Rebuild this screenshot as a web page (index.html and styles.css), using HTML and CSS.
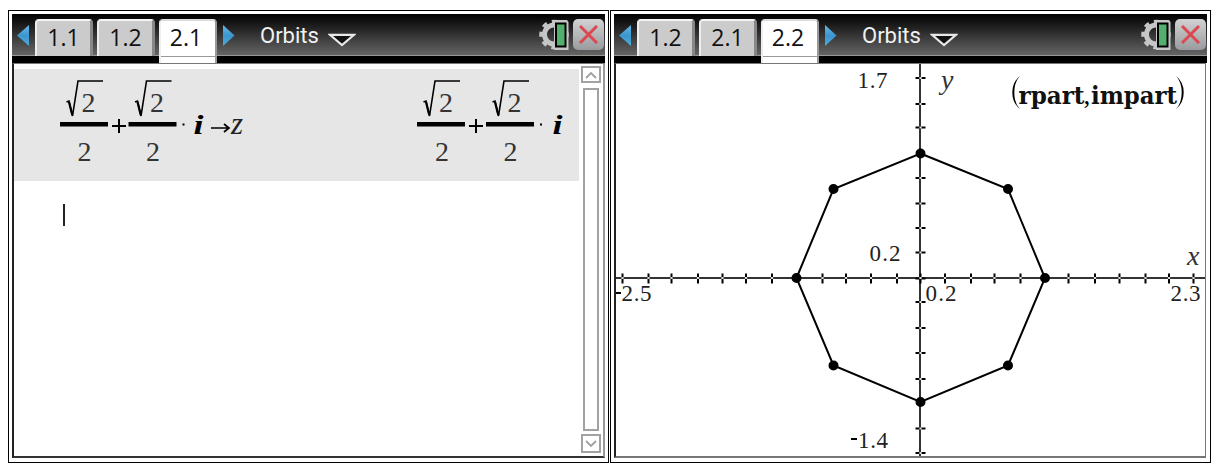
FILE: index.html
```html
<!DOCTYPE html>
<html lang="en">
<head>
<meta charset="utf-8">
<title>Orbits</title>
<link rel="stylesheet" href="styles.css">
</head>
<body>
<svg class="defs" width="0" height="0" aria-hidden="true">
  <defs>
    <linearGradient id="blue" x1="0" y1="0" x2="0" y2="1"><stop offset="0" stop-color="#68b8e4"/><stop offset="0.5" stop-color="#3d96d0"/><stop offset="1" stop-color="#4cabd8"/></linearGradient>
    <symbol id="prev" viewBox="0 0 12 21"><path d="M12 0V21L0 10.5Z" fill="url(#blue)"/></symbol>
    <symbol id="next" viewBox="0 0 12 21"><path d="M0 0V21L11.5 10.5Z" fill="url(#blue)"/></symbol>
    <symbol id="menu" viewBox="0 0 28 14"><path d="M2 1.8H26L14 12Z" fill="#111" stroke="#e8e8e8" stroke-width="2.2"/></symbol>
    <symbol id="gear" viewBox="0 0 30 32">
      <g fill="none" stroke="#c6c6c6"><circle cx="15" cy="15.500" r="9.500" stroke-width="5"/><circle cx="15" cy="15.500" r="13" stroke-width="3.500" stroke-dasharray="5.1 5.1" stroke-dashoffset="2.5"/></g>
      <path d="M15 1H28L29.500 3V31H15Z" fill="#c6c6c6"/>
      <rect x="17" y="4.500" width="9.500" height="23" fill="#50b06c" stroke="#000" stroke-width="2"/>
    </symbol>
    <symbol id="frac" viewBox="0 0 49 92" overflow="visible">
      <path d="M6.5 30L9 29L12.5 44L18 9H43" fill="none" stroke="#000" stroke-width="1.6"/>
      <path d="M9 30L12.3 43" stroke="#000" stroke-width="2.2"/>
      <rect x="0" y="50" width="48" height="4.5"/>
    </symbol>
  </defs>
</svg>
<main class="screens">
  <section class="screen">
    <header class="bar">
      <svg class="prev"><use href="#prev"/></svg>
      <nav class="tabs"><span class="tab">1.1</span><span class="tab">1.2</span><span class="tab active">2.1</span></nav>
      <svg class="next"><use href="#next"/></svg>
      <span class="name">Orbits</span>
      <svg class="menu"><use href="#menu"/></svg>
      <svg class="gear"><use href="#gear"/></svg>
      <span class="close"><svg width="19" height="19" viewBox="0 0 19 19"><path d="M1 1L18 18M18 1L1 18" stroke="#dc4850" stroke-width="3"/></svg></span>
    </header>
    <div class="calc">
      <div class="work">
        <div class="entry">
          <svg class="math" width="190" height="112" viewBox="57 69 190 112">
            <use href="#frac" x="60" y="72" width="49" height="92"/>
            <use href="#frac" x="128.5" y="72" width="49" height="92"/>
            <g class="num"><text x="81.5" y="112">2</text><text x="77.5" y="161">2</text><text x="150" y="112">2</text><text x="146" y="161">2</text></g>
            <path class="plus" d="M112 126H126M119 119V133"/>
            <rect x="182.5" y="123.5" width="2" height="2"/>
            <text class="unit" x="193.5" y="134" textLength="10" lengthAdjust="spacingAndGlyphs">i</text>
            <path class="to" d="M211 128H229M224 124L229 128L224 132"/>
            <text class="var" x="231" y="134">z</text>
          </svg>
          <svg class="math" width="155" height="112" viewBox="57 69 155 112">
            <use href="#frac" x="60" y="72" width="49" height="92"/>
            <use href="#frac" x="129" y="72" width="49" height="92"/>
            <g class="num"><text x="82" y="112">2</text><text x="78" y="161">2</text><text x="150.5" y="112">2</text><text x="146.5" y="161">2</text></g>
            <path class="plus" d="M112 126H126M119 119V133"/>
            <rect x="183" y="123.5" width="2" height="2"/>
            <text class="unit" x="195.5" y="134" textLength="10" lengthAdjust="spacingAndGlyphs">i</text>
          </svg>
        </div>
        <div class="caret"></div>
      </div>
      <div class="scroll">
        <span class="step"><svg width="12" height="8" viewBox="0 0 12 8"><path d="M1 7L6 2L11 7"/></svg></span>
        <span class="track"></span>
        <span class="step low"><svg width="12" height="8" viewBox="0 0 12 8"><path d="M1 1L6 6L11 1"/></svg></span>
      </div>
    </div>
  </section>
  <section class="screen">
    <header class="bar">
      <svg class="prev"><use href="#prev"/></svg>
      <nav class="tabs"><span class="tab">1.2</span><span class="tab">2.1</span><span class="tab active">2.2</span></nav>
      <svg class="next"><use href="#next"/></svg>
      <span class="name">Orbits</span>
      <svg class="menu"><use href="#menu"/></svg>
      <svg class="gear"><use href="#gear"/></svg>
      <span class="close"><svg width="19" height="19" viewBox="0 0 19 19"><path d="M1 1L18 18M18 1L1 18" stroke="#dc4850" stroke-width="3"/></svg></span>
    </header>
    <div class="graph">
      <svg width="589" height="393" viewBox="616 64 589 393">
        <path class="axis" d="M616 278H1205M920 64V457"/>
        <path class="ticks" d="M622.5 273.5v10M648.5 273.5v10M671.5 273.5v10M698 273.5v10M722.5 273.5v10M746 273.5v10M772 273.5v10M822.5 273.5v10M846 273.5v10M871 273.5v10M897 273.5v10M920.5 273.5v10M945 273.5v10M971 273.5v10M994.5 273.5v10M1020.5 273.5v10M1068.5 273.5v10M1095 273.5v10M1119.5 273.5v10M1145.5 273.5v10M1169 273.5v10M1193.5 273.5v10"/>
        <path class="ticks" d="M915.5 78h10M915.5 104h10M915.5 127.5h10M915.5 178h10M915.5 203.5h10M915.5 228h10M915.5 252.5h10M915.5 278.5h10M915.5 302h10M915.5 328h10M915.5 353h10M915.5 379h10M915.5 428.5h10M915.5 453h10"/>
        <path class="gaps" d="M622.5 278h0M648.5 278h0M671.5 278h0M698 278h0M722.5 278h0M746 278h0M772 278h0M822.5 278h0M846 278h0M871 278h0M897 278h0M920.5 278h0M945 278h0M971 278h0M994.5 278h0M1020.5 278h0M1068.5 278h0M1095 278h0M1119.5 278h0M1145.5 278h0M1169 278h0M1193.5 278h0M920.5 78h0M920.5 104h0M920.5 127.5h0M920.5 178h0M920.5 203.5h0M920.5 228h0M920.5 252.5h0M920.5 302h0M920.5 328h0M920.5 353h0M920.5 379h0M920.5 428.5h0M920.5 453h0"/>
        <path class="orbit" d="M920.5 153.5L1008 189L1045 278L1008 365.5L920.5 402L833.5 365.5L796.5 278L833.5 189Z"/>
        <path class="points" d="M920.5 153.5h0M1008 189h0M1045 278h0M1008 365.5h0M920.5 402h0M833.5 365.5h0M796.5 278h0M833.5 189h0"/>
        <g class="label">
          <text x="857.5" y="88" textLength="30">1.7</text>
          <text x="869.5" y="261" textLength="31">0.2</text>
          <text x="925.5" y="301" textLength="31">0.2</text>
          <text x="1170.5" y="301" textLength="30">2.3</text>
          <text x="621.5" y="301" textLength="30">2.5</text>
          <text x="858" y="448" textLength="30">1.4</text>
          <path d="M616 293h5M851 439h6" stroke="#000" stroke-width="2"/>
        </g>
        <text class="axisname" x="941" y="89">y</text>
        <text class="axisname" x="1187" y="264.5">x</text>
        <path class="paren" d="M1020 76Q1012.3 82 1012.3 92.5Q1012.3 103 1020 109Q1014.3 103 1014.3 92.5Q1014.3 82 1020 76ZM1176 76Q1183.7 82 1183.7 92.5Q1183.7 103 1176 109Q1181.7 103 1181.7 92.5Q1181.7 82 1176 76Z"/>
        <text class="pair" x="1018.5" y="104" textLength="66" lengthAdjust="spacingAndGlyphs">rpart</text>
        <text class="comma" x="1083.5" y="104">,</text>
        <text class="pair" x="1091" y="104" textLength="86" lengthAdjust="spacingAndGlyphs">impart</text>
      </svg>
    </div>
  </section>
</main>
</body>
</html>
```
FILE: styles.css
```css
* { box-sizing: border-box; }
body { margin: 0; background: #fff; overflow: hidden; font-family: "Liberation Serif", serif; }
svg { display: block; flex: none; }
.defs { position: absolute; }
.screens { display: flex; gap: 1px; padding: 10px 0 0 8px; }
.screen { width: 601px; height: 453px; flex: none; border: 1px solid #000; padding: 3px; display: flex; flex-direction: column; }
.bar { height: 49px; flex: none; display: flex; align-items: flex-start; background: linear-gradient(#000 0, #0a0a0a 4px, #656565 41px, #999 41px, #999 42px, #000 42px); }
.prev { width: 12px; height: 21px; margin: 11px 0 0 5px; }
.next { width: 12px; height: 21px; margin: 11px 0 0 6px; }
.tabs { display: flex; gap: 4px; margin: 5px 0 0 6px; }
.tab { width: 58px; height: 37px; border: 2px solid #eee; border-right: 3px solid #888; border-bottom: 0; border-top-color: #f4f4f4; border-radius: 4px 4px 0 0; background: #cbcbcb; color: #111; font: 23px/32px "Open Sans", sans-serif; text-align: center; }
.tab.active { height: 44px; padding-right: 4px; background: linear-gradient(#fff 35px, #999 35px, #999 36px, #fff 36px); border-top-color: #ddd; border-right-width: 2px; border-right-color: #999; }
.name { margin: 8px 0 0 25px; width: 60px; color: #f1f1f1; font: 22px/28px Roboto, sans-serif; }
.menu { width: 28px; height: 14px; margin: 19px 0 0 8px; }
.gear { width: 30px; height: 32px; margin: 5px 0 0 auto; }
.close { width: 31px; height: 31px; margin: 5px 1px 0 4px; border-radius: 5px; background: linear-gradient(#d2d2d4, #9a9b9e); display: flex; align-items: center; justify-content: center; }
.calc, .graph { flex: none; height: 396px; border: 1px solid #777; border-left: 2px solid #222; border-bottom: 2px solid #333; }
.graph { height: 395px; margin-right: 1px; border-bottom-color: #777; overflow: hidden; }
.calc { height: 395px; display: flex; border-right-width: 2px; border-right-color: #999; }
.work { width: 565px; padding-top: 5px; }
.entry { height: 112px; background: #e6e6e6; display: flex; justify-content: space-between; padding-left: 43px; padding-right: 10px; }
.caret { width: 2px; height: 22px; margin: 23px 0 0 49px; background: #222; }
.num { font-size: 28px; fill: #333; }
.plus { stroke: #000; stroke-width: 2; }
.unit { font: italic bold 28px "Liberation Serif", serif; }
.to { fill: none; stroke: #000; stroke-width: 1.7; }
.var { font: italic 31px "Liberation Serif", serif; fill: #222; }
.scroll { width: 20px; margin-left: 2px; padding-top: 2px; display: flex; flex-direction: column; align-items: center; }
.step { width: 20px; height: 17px; flex: none; border: 2px solid #a2a2a2; display: flex; align-items: center; justify-content: center; }
.step.low { height: 19px; }
.step path { fill: none; stroke: #a0a0a0; stroke-width: 1.8; }
.track { width: 16px; height: 343px; flex: none; border: 2px solid #a2a2a2; margin: 5px 0 3px; }
.axis { stroke: #333; stroke-width: 2; fill: none; }
.ticks { stroke: #000; stroke-width: 2; fill: none; }
.gaps { stroke: #ddd; stroke-width: 2.2; stroke-linecap: square; }
.orbit { fill: none; stroke: #000; stroke-width: 2; }
.points { stroke: #000; stroke-width: 10; stroke-linecap: round; }
.label { font-size: 23px; fill: #222; }
.axisname { font: italic 28px "Liberation Serif", serif; fill: #333; }
.pair { font: bold 24px "DejaVu Serif Condensed", "DejaVu Serif", serif; fill: #111; }
.comma { font-size: 27px; }
```
